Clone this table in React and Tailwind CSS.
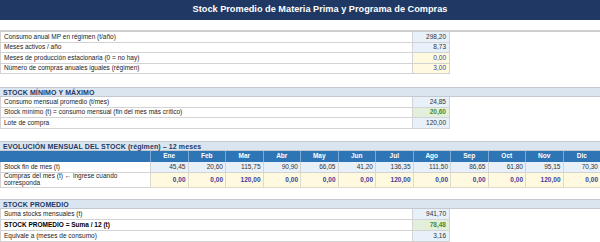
const months = ["Ene", "Feb", "Mar", "Abr", "May", "Jun", "Jul", "Ago", "Sep", "Oct", "Nov", "Dic"];
const stock = ["45,45", "20,60", "115,75", "90,90", "66,05", "41,20", "136,35", "111,50", "86,65", "61,80", "95,15", "70,30"];
const compras = ["0,00", "0,00", "120,00", "0,00", "0,00", "0,00", "120,00", "0,00", "0,00", "0,00", "120,00", "0,00"];

const tones = {
  blue: "bg-[#e8f0f9] text-[#333333]",
  yellow: "bg-[#fffadf] text-[#3d3d9e]",
  green: "bg-[#e2efda] text-[#4f8a2b] font-bold",
};

function ValueRow({ label, value, tone = "blue", bold = false, h = "h-[10.5px]" }) {
  return (
    <div className={`grid grid-cols-[412.5px_37.5px_1fr] ${h}`}>
      <div
        className={`flex items-center border-b border-l border-r border-[#d3d3d3] pl-[3px] ${
          bold ? "font-bold text-black" : "text-[#222222]"
        }`}
      >
        {label}
      </div>
      <div className={`flex items-center justify-end border-b border-r border-[#d3d3d3] pr-[3px] ${tones[tone]}`}>
        {value}
      </div>
      <div />
    </div>
  );
}

function SectionHeader({ children, h = "h-[10px]" }) {
  return (
    <div
      className={`flex items-center ${h} bg-[#dbe5f0] border-y border-[#c4c9d0] pl-[3px] text-[7px] font-bold tracking-[0.1px] text-[#1f3864]`}
    >
      {children}
    </div>
  );
}

export default function App() {
  return (
    <div className="w-[600px] h-[242px] overflow-hidden bg-white text-[6.5px] leading-none" style={{ fontFamily: '"Liberation Sans", Arial, sans-serif' }}>
      <div className="h-[20px] bg-[#1f3864] flex items-center justify-center pl-[40px] text-white font-bold text-[9.2px]">
        Stock Promedio de Materia Prima y Programa de Compras
      </div>
      <div className="h-[12px] border-b-2 border-[#cfcfcf]" />

      <ValueRow label="Consumo anual MP en régimen (t/año)" value="298,20" />
      <ValueRow label="Meses activos / año" value="8,73" />
      <ValueRow label="Meses de producción estacionaria (0 = no hay)" value="0,00" tone="yellow" />
      <ValueRow label="Número de compras anuales iguales (régimen)" value="3,00" tone="yellow" />

      <div className="h-[13px]" />
      <SectionHeader>STOCK MÍNIMO Y MÁXIMO</SectionHeader>
      <ValueRow label="Consumo mensual promedio (t/mes)" value="24,85" h="h-[10.7px]" />
      <ValueRow label="Stock mínimo (t) = consumo mensual (fin del mes más crítico)" value="20,60" tone="green" h="h-[10.7px]" />
      <ValueRow label="Lote de compra" value="120,00" h="h-[10.7px]" />

      <div className="h-[12px]" />
      <SectionHeader>EVOLUCIÓN MENSUAL DEL STOCK (régimen) – 12 meses</SectionHeader>

      <div className="grid grid-cols-[150px_repeat(12,minmax(0,1fr))]">
        <div className="h-[11px] bg-[#2e75b6]" />
        {months.map((m) => (
          <div
            key={m}
            className="h-[11px] bg-[#2e75b6] border-l border-[#7fa9d4] flex items-center justify-center text-white font-bold"
          >
            {m}
          </div>
        ))}

        <div className="h-[11px] flex items-center pl-[3px] border-b border-l border-[#d3d3d3] text-[#222222]">
          Stock fin de mes (t)
        </div>
        {stock.map((v, i) => (
          <div
            key={i}
            className="h-[11px] flex items-center justify-end pr-[2px] bg-[#e8f0f9] border-b border-l border-[#d3d3d3] text-[#333333]"
          >
            {v}
          </div>
        ))}

        <div className="h-[15px] flex items-center pl-[3px] pr-[20px] border-b border-l border-[#d3d3d3] text-[#222222] leading-[1.05]">
          Compras del mes (t) ← ingrese cuando corresponda
        </div>
        {compras.map((v, i) => (
          <div
            key={i}
            className="h-[15px] flex items-center justify-end pr-[2px] bg-[#fffadf] border-b border-l border-[#dcdccc] text-[#3d3d9e] font-bold"
          >
            {v}
          </div>
        ))}
      </div>

      <div className="h-[11px]" />
      <SectionHeader>STOCK PROMEDIO</SectionHeader>
      <ValueRow label="Suma stocks mensuales (t)" value="941,70" h="h-[11px]" />
      <ValueRow label="STOCK PROMEDIO = Suma / 12 (t)" value="78,48" tone="green" bold h="h-[11px]" />
      <ValueRow label="Equivale a (meses de consumo)" value="3,16" h="h-[11px]" />
    </div>
  );
}
